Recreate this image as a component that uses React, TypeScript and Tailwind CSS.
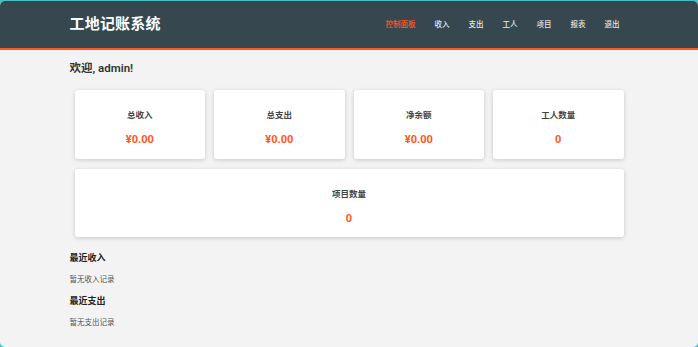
export default function App() {
  const navLinks = ["控制面板", "收入", "支出", "工人", "项目", "报表", "退出"];
  const stats = [
    { label: "总收入", value: "¥0.00" },
    { label: "总支出", value: "¥0.00" },
    { label: "净余额", value: "¥0.00" },
    { label: "工人数量", value: "0" },
  ];

  return (
    <div className="h-[347px] bg-[#44c2c2] pt-px" style={{ fontFamily: 'Roboto, "Noto Sans CJK SC", sans-serif' }}>
      <div className="h-[346px] rounded-[5px] overflow-hidden bg-[#f3f3f3]">
        {/* Header */}
        <header className="h-[49px] bg-[#37474f] border-b-2 border-[#ff5722]">
          <div className="w-[559px] mx-auto h-full flex items-center justify-between pl-0 pr-[9px]">
            <h1 className="text-[15px] font-bold text-white tracking-[0.2px]">工地记账系统</h1>
            <nav className="flex gap-[19px] text-[7.5px] font-medium text-[#e2e6e8]">
              {navLinks.map((name, i) => (
                <a key={name} className={i === 0 ? "text-[#ff5722]" : ""}>
                  {name}
                </a>
              ))}
            </nav>
          </div>
        </header>

        <main className="w-[559px] mx-auto pt-[10px]">
          <h2 className="text-[11.5px] font-semibold text-[#333] leading-[16px]">欢迎, admin!</h2>

          <div className="grid grid-cols-4 gap-x-[9px] gap-y-[10px] px-[5px] mt-[14px]">
            {stats.map((s) => (
              <div key={s.label} className="h-[69px] bg-white rounded-[3px] shadow-[0_1px_4px_rgba(0,0,0,0.18)] flex flex-col items-center pt-[19px]">
                <div className="text-[8.5px] font-semibold text-[#444] leading-[12px]">{s.label}</div>
                <div className="mt-[12px] text-[11px] font-bold text-[#ff5722] leading-[14px]">{s.value}</div>
              </div>
            ))}
            <div className="col-span-4 h-[68px] bg-white rounded-[3px] shadow-[0_1px_4px_rgba(0,0,0,0.18)] flex flex-col items-center pt-[19px]">
              <div className="text-[8.5px] font-semibold text-[#444] leading-[12px]">项目数量</div>
              <div className="mt-[12px] text-[11px] font-bold text-[#ff5722] leading-[14px]">0</div>
            </div>
          </div>

          <section className="mt-[15px]">
            <h3 className="text-[9px] font-bold text-[#222] leading-[13px]">最近收入</h3>
            <p className="mt-[9px] text-[7.5px] text-[#555] leading-[11px]">暂无收入记录</p>
            <h3 className="mt-[10px] text-[9px] font-bold text-[#222] leading-[13px]">最近支出</h3>
            <p className="mt-[9px] text-[7.5px] text-[#555] leading-[11px]">暂无支出记录</p>
          </section>
        </main>
      </div>
    </div>
  );
}
